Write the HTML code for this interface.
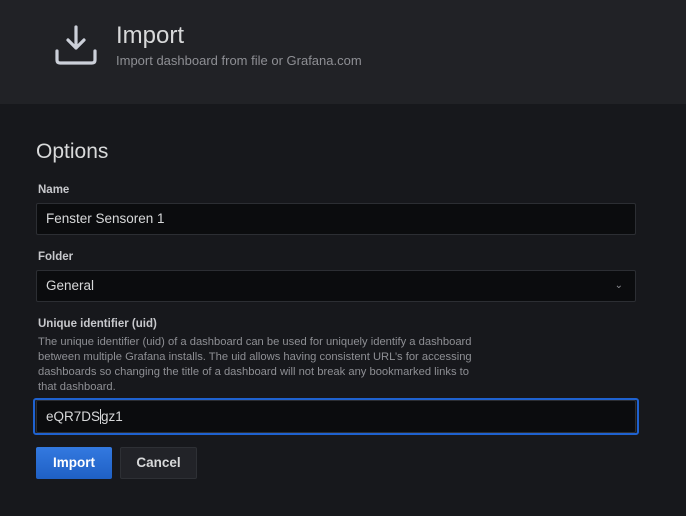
<!DOCTYPE html>
<html><head><style>
*{margin:0;padding:0;box-sizing:border-box}
body{width:686px;height:516px;background:#17181c;font-family:"Liberation Sans",sans-serif;position:relative;overflow:hidden}
.hdr{position:absolute;left:0;top:0;width:686px;height:104px;background:#212226}
.a{position:absolute;white-space:nowrap}
.inp{position:absolute;left:36px;width:600px;height:32px;background:#0b0c0e;border:1px solid #2c2e33;border-radius:2px;color:#d8d9da;font-size:13.5px;padding-left:9px;line-height:30px}
.lbl{font-size:11.5px;font-weight:bold;color:#c7c8cc}
.btn{position:absolute;top:447px;height:32px;border-radius:2px;color:#fff;font-weight:bold;font-size:13.5px;text-align:center;line-height:32px}
</style></head><body>
<div class="hdr"></div>
<svg class="a" style="left:55px;top:24px" width="42" height="42" viewBox="0 0 42 42" fill="none" stroke="#ccd0d9" stroke-width="3.2" stroke-linecap="round" stroke-linejoin="round">
<path d="M21 3 V24 M13 16 L21 24 L29 16"/>
<path d="M2 27 V36 Q2 39 5 39 H37 Q40 39 40 36 V27"/>
</svg>
<div class="a" style="left:116px;top:22px;font-size:24px;color:#d8d9da">Import</div>
<div class="a" style="left:116px;top:53px;font-size:13px;color:#8e8f94">Import dashboard from file or Grafana.com</div>
<div class="a" style="left:36px;top:140px;font-size:21px;color:#d8d9da">Options</div>
<div class="a lbl" style="left:38px;top:184px">Name</div>
<div class="inp" style="top:203px">Fenster Sensoren 1</div>
<div class="a lbl" style="left:38px;top:251px">Folder</div>
<div class="inp" style="top:270px">General<span style="position:absolute;right:12px;top:0;color:#8e8f94;font-size:10px">&#8964;</span></div>
<div class="a lbl" style="left:38px;top:318px">Unique identifier (uid)</div>
<div class="a" style="left:38px;top:335px;font-size:11.2px;line-height:15px;color:#8e8f94;white-space:normal;width:475px">The unique identifier (uid) of a dashboard can be used for uniquely identify a dashboard between multiple Grafana installs. The uid allows having consistent URL’s for accessing dashboards so changing the title of a dashboard will not break any bookmarked links to<br>that dashboard.</div>
<div class="a" style="left:33px;top:398px;width:606px;height:37px;border:2px solid #1f62d0;border-radius:3px"></div>
<div class="inp" style="top:400px;height:33px;line-height:32px">eQR7DS<span style="border-left:1px solid #d8d9da"></span>gz1</div>
<div class="btn" style="left:36px;width:76px;background:linear-gradient(#3379e0,#1f60c4)">Import</div>
<div class="btn" style="left:120px;width:77px;background:#222328;border:1px solid #2e3035;line-height:30px;color:#d8d9da">Cancel</div>
</body></html>
